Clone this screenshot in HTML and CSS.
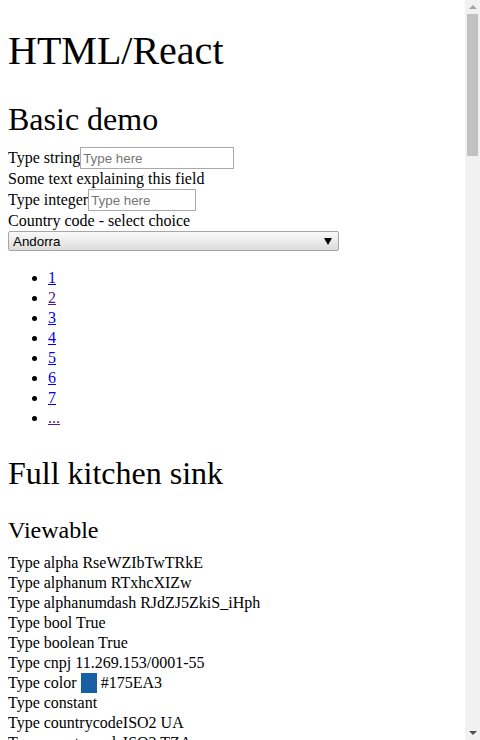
FILE: index.html
```html
<!DOCTYPE html>
<html>
<head>
<meta charset="utf-8">
<title>HTML/React</title>
<link rel="stylesheet" href="styles.css">
</head>
<body>
<h1>HTML/React</h1>
<h2 class="h-basic">Basic demo</h2>
<form class="basic">
  <div class="row"><label>Type string</label><input class="field" type="text" placeholder="Type here"></div>
  <div class="row">Some text explaining this field</div>
  <div class="row"><label>Type integer</label><input class="field field-int" type="text" placeholder="Type here"></div>
  <div class="row">Country code - select choice</div>
  <div class="select"><span class="select-value">Andorra</span><span class="select-arrow"></span></div>
</form>
<ul class="pages">
  <li><a href="#1">1</a></li>
  <li><a class="visited" href="#2">2</a></li>
  <li><a href="#3">3</a></li>
  <li><a href="#4">4</a></li>
  <li><a href="#5">5</a></li>
  <li><a href="#6">6</a></li>
  <li><a href="#7">7</a></li>
  <li><a class="visited" href="#more">...</a></li>
</ul>
<h2 class="h-sink">Full kitchen sink</h2>
<h3>Viewable</h3>
<div class="view">
  <div class="vrow">Type alpha RseWZIbTwTRkE</div>
  <div class="vrow">Type alphanum RTxhcXIZw</div>
  <div class="vrow">Type alphanumdash RJdZJ5ZkiS_iHph</div>
  <div class="vrow">Type bool True</div>
  <div class="vrow">Type boolean True</div>
  <div class="vrow">Type cnpj 11.269.153/0001-55</div>
  <div class="vrow">Type color <span class="swatch"></span> #175EA3</div>
  <div class="vrow">Type constant</div>
  <div class="vrow">Type countrycodeISO2 UA</div>
  <div class="vrow">Type countrycodeISO3 TZA</div>
  <div class="vrow">Type cpf 435.511.868-06</div>
  <div class="vrow">Type currency USD</div>
  <div class="vrow">Type date 2019-04-12</div>
  <div class="vrow">Type datetime 2019-04-12 10:31:07</div>
  <div class="vrow">Type decimal 74.55</div>
  <div class="vrow">Type email sample@example.com</div>
  <div class="vrow">Type float 0.4815</div>
  <div class="vrow">Type integer 42</div>
  <div class="vrow">Type ipv4 192.168.10.4</div>
  <div class="vrow">Type ipv6 fe80::1ff:fe23:4567:890a</div>
  <div class="vrow">Type json {"a": 1}</div>
  <div class="vrow">Type languagecode en</div>
  <div class="vrow">Type latitude 48.8566</div>
  <div class="vrow">Type longitude 2.3522</div>
  <div class="vrow">Type money 120.00</div>
  <div class="vrow">Type password ******</div>
  <div class="vrow">Type percent 12%</div>
  <div class="vrow">Type phone +1 555 0100</div>
  <div class="vrow">Type slug sample-slug</div>
  <div class="vrow">Type string Lorem ipsum</div>
  <div class="vrow">Type text Lorem ipsum dolor sit amet</div>
  <div class="vrow">Type time 10:31:07</div>
  <div class="vrow">Type timezone Europe/Kiev</div>
  <div class="vrow">Type url http://example.com</div>
  <div class="vrow">Type uuid 0f8fad5b-d9cb-469f-a165-70867728950e</div>
</div>
<div class="scrollbar" aria-hidden="true">
  <div class="sb-btn sb-up"><span class="sb-tri-up"></span></div>
  <div class="sb-track"><div class="sb-thumb"></div></div>
  <div class="sb-btn sb-down"><span class="sb-tri-down"></span></div>
</div>
</body>
</html>
```
FILE: styles.css
```css
html {
  background: #fff;
}
body {
  margin: 8px;
  font-family: "Liberation Serif", "Times New Roman", serif;
  font-size: 16px;
  color: #000;
}
h1 {
  font-size: 40px;
  line-height: 46px;
  font-weight: normal;
  margin: 20px 0 0;
}
h2 {
  font-size: 32px;
  line-height: 37px;
  font-weight: normal;
  margin: 27px 0 0;
}
.h-basic {
  margin-bottom: 9px;
}
.h-sink {
  margin-bottom: 24px;
}
h3 {
  font-size: 24px;
  line-height: 28px;
  font-weight: normal;
  margin: 0 0 9px;
}
.basic {
  margin: 0;
}
.row {
  display: flex;
  align-items: flex-start;
  height: 21px;
  line-height: 21px;
}
.field {
  width: 154px;
  height: 22px;
  box-sizing: border-box;
  border: 1px solid #a9a9a9;
  padding: 1px 2px;
  margin: 0;
  font-family: "Liberation Sans", Arial, sans-serif;
  font-size: 13.33px;
  line-height: normal;
}
.field::placeholder {
  color: #757575;
}
.field-int {
  width: 108px;
}
.select {
  width: 331px;
  height: 20px;
  margin-top: 0;
  box-sizing: border-box;
  border: 1px solid #a6a6a6;
  border-radius: 2px;
  background: linear-gradient(#fafafa, #dcdcdc);
  display: flex;
  align-items: center;
  justify-content: space-between;
  padding: 0 6px 0 4px;
  font-family: "Liberation Sans", Arial, sans-serif;
  font-size: 13.33px;
  color: #000;
}
.select-arrow {
  width: 0;
  height: 0;
  border-left: 4px solid transparent;
  border-right: 4px solid transparent;
  border-top: 7px solid #000;
}
.pages {
  margin: 17px 0 16px;
  padding-left: 40px;
}
.pages li {
  line-height: 20px;
}
a {
  color: #0000ee;
}
a.visited {
  color: #551a8b;
}
.vrow {
  line-height: 20px;
  height: 20px;
}
.swatch {
  display: inline-block;
  width: 16px;
  height: 20px;
  background: #175ea3;
  vertical-align: top;
}
.scrollbar {
  position: fixed;
  top: 0;
  right: 0;
  bottom: 0;
  width: 15px;
  background: #f1f1f1;
  display: flex;
  flex-direction: column;
}
.sb-btn {
  height: 14px;
  display: flex;
  align-items: center;
  justify-content: center;
}
.sb-track {
  flex: 1;
  padding: 0 2px;
}
.sb-thumb {
  height: 142px;
  background: #c1c1c1;
}
.sb-tri-up {
  width: 0;
  height: 0;
  border-left: 4px solid transparent;
  border-right: 4px solid transparent;
  border-bottom: 4px solid #a3a3a3;
}
.sb-tri-down {
  width: 0;
  height: 0;
  border-left: 4px solid transparent;
  border-right: 4px solid transparent;
  border-top: 4px solid #505050;
}
```
